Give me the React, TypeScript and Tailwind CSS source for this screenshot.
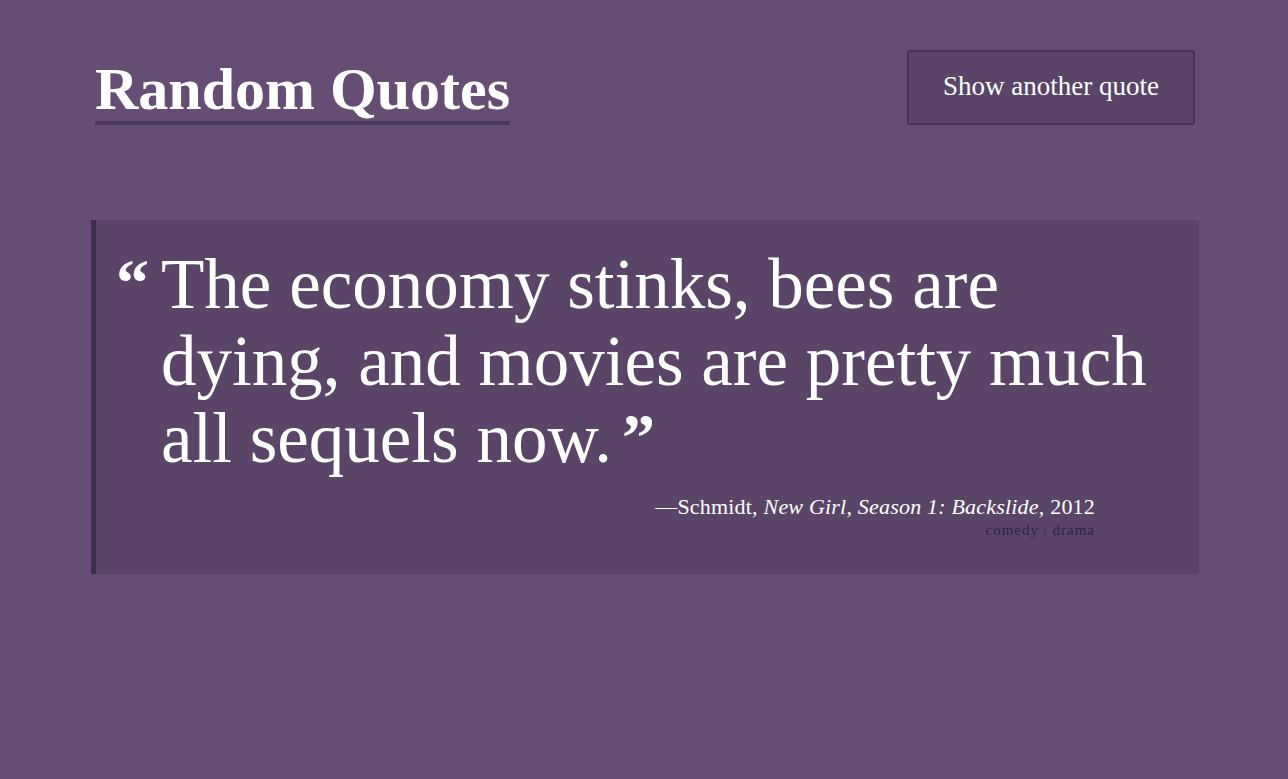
export default function App() {
  return (
    <div className="min-h-[779px] w-full bg-[#654d73] text-white">
      <div className="ml-[91px] w-[1108px] pt-[50px]" style={{ fontFamily: '"Liberation Serif", "Times New Roman", serif' }}>
        <header className="flex items-start justify-between pl-[4px] pr-[4px]">
          <h1 className="mt-[7px] border-b-4 border-[#4a3a5a] text-[60px] font-bold leading-[64px]">
            Random Quotes
          </h1>
          <button className="h-[75px] w-[288px] rounded-[3px] border-2 border-[#46354f] bg-[#5a4569] pb-[2px] text-[27px] text-white">
            Show another quote
          </button>
        </header>
        <section className="mt-[95px] rounded-r-[3px] border-l-[5px] border-[#3e2f4b] bg-[#5a4569] pb-[34px] pl-[20px] pr-[36px] pt-[26px]">
          <div className="flex">
            <span className="w-[45px] shrink-0 pt-[12px] text-[66px] font-bold leading-[50px]">
              “
            </span>
            <p className="text-[71px] leading-[77px]">
              The economy stinks, bees are dying, and movies are pretty much all sequels now.
              <span className="ml-[10px] inline-block align-top pt-[12px] text-[66px] font-bold leading-[50px]">
                ”
              </span>
            </p>
          </div>
          <div className="mr-[68px] mt-[17px] text-right text-[22px] leading-[26px] tracking-[0.2px]">
            —Schmidt, <i>New Girl, Season 1: Backslide</i>, 2012
          </div>
          <div className="mr-[68px] text-right text-[15px] leading-[20px] tracking-[1px] text-[#2f2340]">
            comedy <span className="text-[#3e2f4b]">|</span> drama
          </div>
        </section>
      </div>
    </div>
  );
}
